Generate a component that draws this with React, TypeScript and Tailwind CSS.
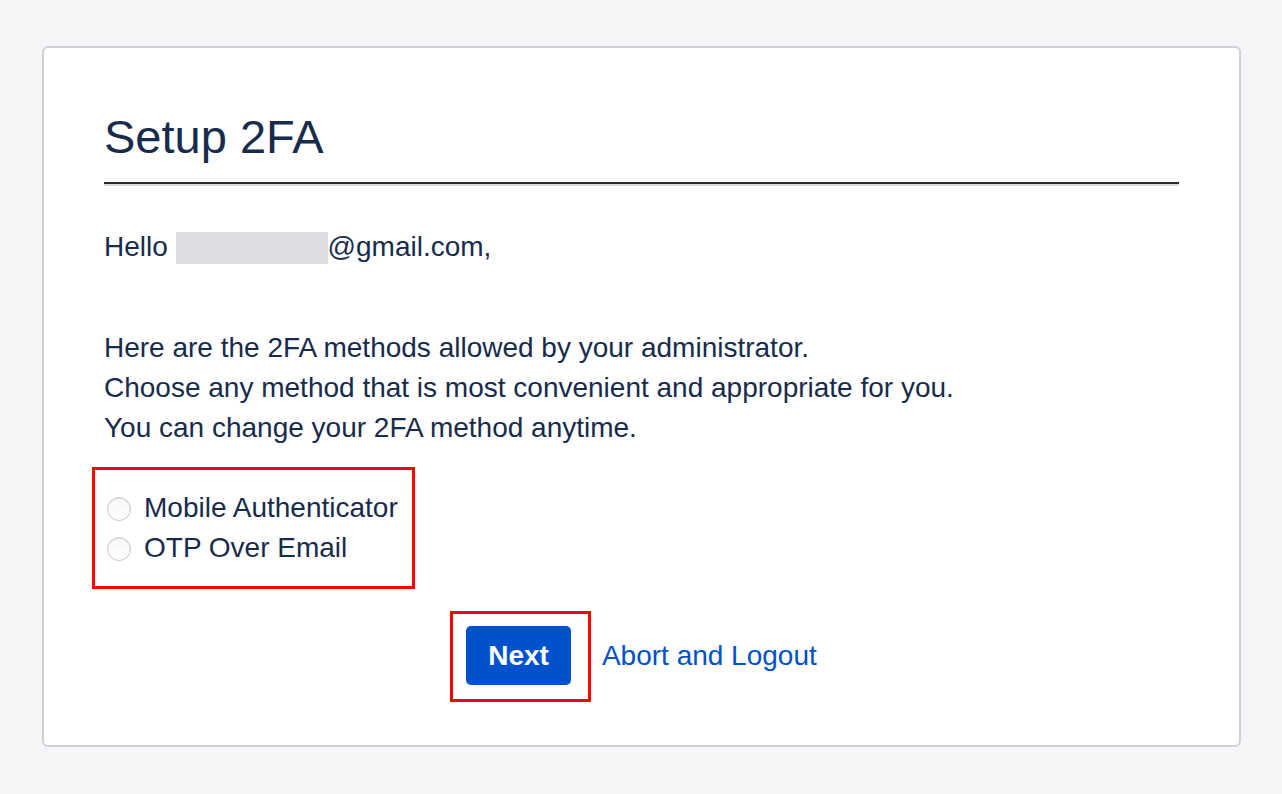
import React from "react";

function Radio({ label }: { label: string }) {
  return (
    <div className="flex h-[40px] items-center">
      <span className="ml-[3px] mt-[2px] block h-[24px] w-[24px] rounded-full border border-[#c9c9cc] bg-gradient-to-b from-[#f7f7f7] to-white shadow-[inset_0_1px_2px_rgba(0,0,0,0.08)]" />
      <span className="ml-[13px]">{label}</span>
    </div>
  );
}

export default function App() {
  return (
    <div
      className="min-h-[794px] bg-[#f4f5f7] pl-[42px] pr-[41px] pt-[46px] text-[#172b4d]"
      style={{ fontFamily: '"Liberation Sans", Arial, Helvetica, sans-serif' }}
    >
      <div className="h-[701px] rounded-[6px] border-2 border-[#cfd0d3] bg-white px-[60px] pb-[60px] pt-[62px]">
        <h1 className="text-[47px] leading-[53px] text-[#172b4d]">Setup 2FA</h1>
        <div className="mt-[19px] h-[4px] border-b-2 border-t-2 border-b-[#d9d9d9] border-t-[#2a2a2a]" />

        <p className="mt-[41px] text-[28px] leading-[40px]">
          Hello{" "}
          <span className="inline-block h-[32px] w-[152px] bg-[#dcdde0] align-[-8px]" />
          @gmail.com,
        </p>

        <div className="mt-[61px] text-[28px] leading-[40px]">
          <p>Here are the 2FA methods allowed by your administrator.</p>
          <p>Choose any method that is most convenient and appropriate for you.</p>
          <p>You can change your 2FA method anytime.</p>
        </div>

        <div className="relative mt-[40px] inline-flex flex-col text-[28px] leading-[40px]">
          <Radio label="Mobile Authenticator" />
          <Radio label="OTP Over Email" />
          <div className="pointer-events-none absolute -bottom-[21px] -left-[12px] -right-[17px] -top-[21px] border-[3px] border-[#ff0000]" />
        </div>

        <div className="mt-[58px] flex items-center justify-center gap-[31px]">
          <div className="relative">
            <button className="h-[59px] rounded-[5px] bg-[#0052cc] px-[22px] text-[28px] font-bold text-white">
              Next
            </button>
            <div className="pointer-events-none absolute -bottom-[17px] -left-[16px] -right-[20px] -top-[15px] border-[3px] border-[#ff0000]" />
          </div>
          <a href="#" className="text-[28px] leading-[40px] text-[#0052cc]">
            Abort and Logout
          </a>
        </div>
      </div>
    </div>
  );
}
